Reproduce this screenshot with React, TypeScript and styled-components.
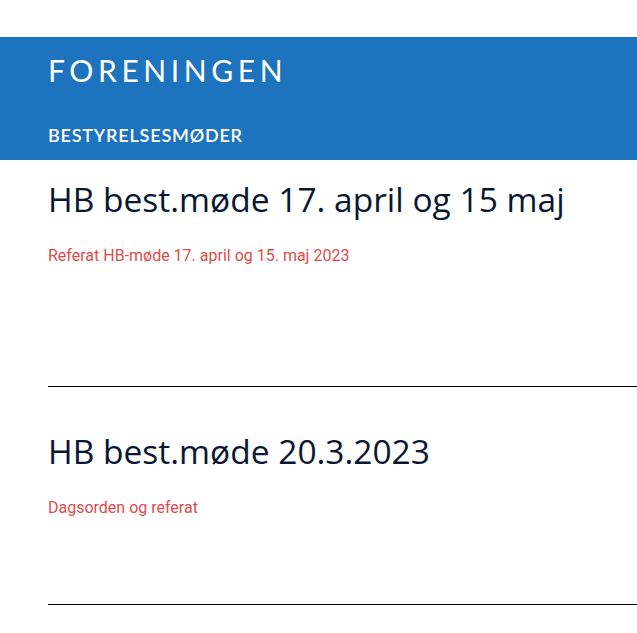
import React from 'react';
import styled, { createGlobalStyle } from 'styled-components';

const GlobalStyle = createGlobalStyle`
  body {
    margin: 0;
    background: #fff;
  }
`;

const Page = styled.div`
  padding-top: 37px;
  overflow: hidden;
`;

const Header = styled.header`
  background: #1e73be;
  height: 123px;
  padding: 0 48px;
  box-sizing: border-box;
  display: flex;
  flex-direction: column;
`;

const SiteName = styled.div`
  margin-top: 15px;
  color: #fff;
  font-family: 'Lato', sans-serif;
  font-weight: 400;
  font-size: 30px;
  letter-spacing: 4.6px;
  line-height: 36px;
`;

const Section = styled.div`
  margin-top: 37px;
  color: #fff;
  font-family: 'Lato', sans-serif;
  font-weight: 600;
  font-size: 18px;
  letter-spacing: 0.8px;
  line-height: 20px;
`;

const List = styled.main`
  padding-left: 48px;
`;

const Post = styled.article`
  border-bottom: 1px solid #000;
  padding-top: 17px;
  height: 227px;
  box-sizing: border-box;
  & + & {
    height: 218px;
    padding-top: 42px;
  }
`;

const Title = styled.h2`
  margin: 0;
  font-family: 'Open Sans', sans-serif;
  font-weight: 400;
  font-size: 33.5px;
  line-height: 44px;
  color: #0a1733;
`;

const Link = styled.a`
  display: block;
  margin-top: 25px;
  font-family: 'Roboto', sans-serif;
  font-size: 16px;
  line-height: 20px;
  color: #dd4b4b;
  text-decoration: none;
`;

const posts = [
  { title: 'HB best.møde 17. april og 15 maj', link: 'Referat HB-møde 17. april og 15. maj 2023' },
  { title: 'HB best.møde 20.3.2023', link: 'Dagsorden og referat' },
];

export default function App() {
  return (
    <Page>
      <GlobalStyle />
      <Header>
        <SiteName>FORENINGEN</SiteName>
        <Section>BESTYRELSESMØDER</Section>
      </Header>
      <List>
        {posts.map((p) => (
          <Post key={p.title}>
            <Title>{p.title}</Title>
            <Link href="#">{p.link}</Link>
          </Post>
        ))}
      </List>
    </Page>
  );
}
